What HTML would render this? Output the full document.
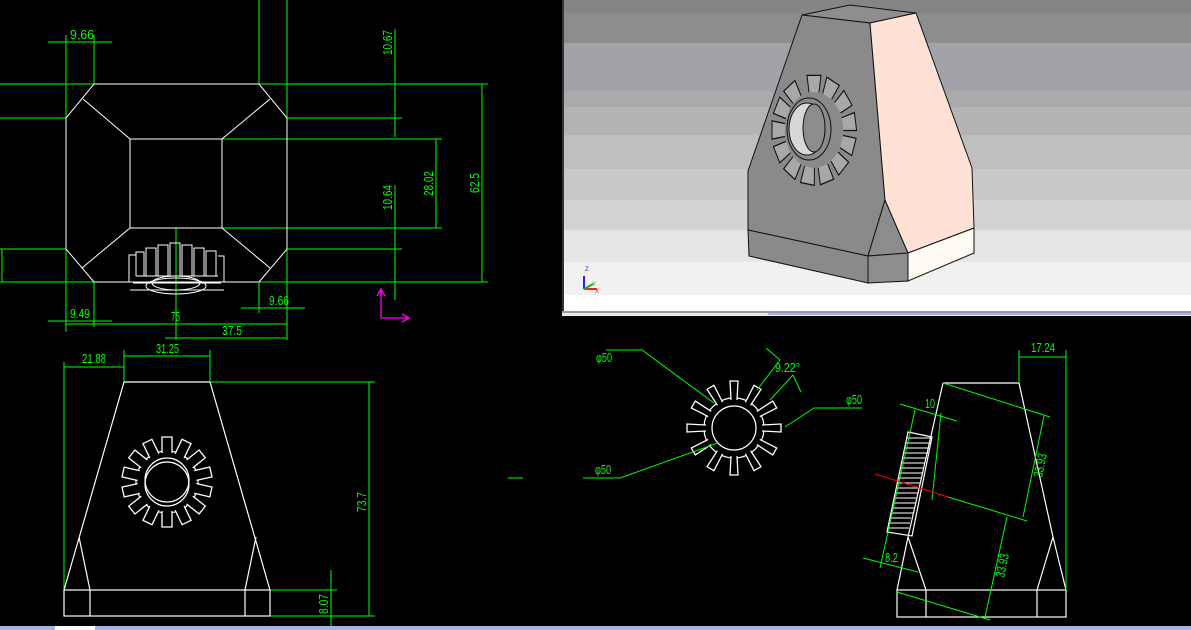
<!DOCTYPE html>
<html><head><meta charset="utf-8"><style>
html,body{margin:0;padding:0;background:#000;width:1191px;height:630px;overflow:hidden}
svg{display:block}
text{font-family:"Liberation Sans",sans-serif;font-size:13px;fill:#00ff00}
</style></head><body>
<svg width="1191" height="630" viewBox="0 0 1191 630" xmlns="http://www.w3.org/2000/svg">
<defs>
<path id="t1" d="M-5,-29 L-5,-45 L5,-45 L5,-29" fill="#000" stroke="#fff" stroke-width="1.3"/>
<path id="t2" d="M-3,-28 L-4,-47 L4,-47 L3,-28" fill="#000" stroke="#fff" stroke-width="1.3"/>
<path id="t3" d="M-5,-29 L-7,-42 L7,-42 L5,-29" fill="#a8a8a8" stroke="#111" stroke-width="1"/>
</defs>

<!-- ===== 3D view panel ===== -->
<g>
<rect x="562" y="0" width="629" height="316" fill="#fff"/>
<rect x="563" y="0" width="628" height="14" fill="#858585"/>
<rect x="563" y="14" width="628" height="29" fill="#8d8d8d"/>
<rect x="563" y="43" width="628" height="48" fill="#a2a2a8"/>
<rect x="563" y="91" width="628" height="16" fill="#aaaaaa"/>
<rect x="563" y="107" width="628" height="28" fill="#b4b4b4"/>
<rect x="563" y="135" width="628" height="34" fill="#bfbfbf"/>
<rect x="563" y="169" width="628" height="31" fill="#c9c9c9"/>
<rect x="563" y="200" width="628" height="30" fill="#d3d3d3"/>
<rect x="563" y="230" width="628" height="32" fill="#e5e5e5"/>
<rect x="563" y="262" width="628" height="33" fill="#f1f1f1"/>
<rect x="562" y="0" width="2" height="316" fill="#333"/>
<rect x="562" y="311" width="629" height="2" fill="#999"/>
<rect x="562" y="313" width="629" height="3" fill="#e8e8ee"/>
<rect x="768" y="313" width="423" height="2" fill="#9fb2f0"/>
<g stroke="#111" stroke-width="1">
<polygon points="802,15 850,5 916,13 870,23" fill="#8e8e8e"/>
<polygon points="748,171 802,15 870,23 885,200 868,256 748,230" fill="#8a8a8a"/>
<polygon points="885,200 868,256 908,253" fill="#8c8c8c"/>
<polygon points="870,23 916,13 972,168 974,228 908,253 885,200" fill="#ffe2d5"/>
<polygon points="748,230 868,256 868,283 749,256" fill="#8a8a8a"/>
<polygon points="868,256 908,253 908,281 868,283" fill="#8e8e8e"/>
<polygon points="908,253 974,228 974,253 908,281" fill="#fffaf2"/>
</g>
<g transform="translate(814,130) scale(1,1.3)">
<use href="#t3"/><use href="#t3" transform="rotate(27)"/><use href="#t3" transform="rotate(54)"/><use href="#t3" transform="rotate(81)"/><use href="#t3" transform="rotate(108)"/><use href="#t3" transform="rotate(135)"/><use href="#t3" transform="rotate(162)"/><use href="#t3" transform="rotate(189)"/><use href="#t3" transform="rotate(216)"/><use href="#t3" transform="rotate(243)"/><use href="#t3" transform="rotate(270)"/><use href="#t3" transform="rotate(297)"/><use href="#t3" transform="rotate(324)"/>
</g>
<ellipse cx="809" cy="129" rx="22" ry="31" fill="#8a8a8a" stroke="#111"/>
<ellipse cx="807" cy="129" rx="18" ry="26" fill="#d8d8d8" stroke="#111"/>
<ellipse cx="814" cy="128" rx="11" ry="24" fill="#8c8c8c" stroke="#111"/>
<line x1="584" y1="276" x2="584" y2="289" stroke="#22f" stroke-width="2"/>
<line x1="584" y1="289" x2="597" y2="289" stroke="#e22" stroke-width="2"/>
<line x1="584" y1="289" x2="593" y2="284" stroke="#2a2" stroke-width="2"/>
<text x="585" y="271" style="font-size:6px;fill:#22f">Z</text>
<text x="592" y="286" style="font-size:6px;fill:#2a2">Y</text>
<text x="595" y="293" style="font-size:6px;fill:#e22">X</text>
</g>

<!-- ===== Top view ===== -->
<g stroke="#00ff00" stroke-width="1" fill="none">
<path d="M0,84H488 M0,282H488 M0,118H66 M287,118H402 M0,249H66 M287,249H402 M222,139H442 M222,228H442"/>
<path d="M259,0V84 M287,0V340 M66,35V332 M94,35V84 M94,282V327 M259,282V313 M395,29V137 M395,185V300 M436,139V228 M482,84V282 M176,228V340 M2,249V282"/>
<path d="M48,42H112 M48,321H112 M241,308H305 M66,324H287 M176,338H287"/>
</g>
<g stroke="#fff" stroke-width="1" fill="none">
<polygon points="94,84 259,84 287,118 287,249 259,282 94,282 66,249 66,118"/>
<rect x="130" y="139" width="92" height="89"/>
<path d="M130,139L83,99 M222,139L270,99 M130,228L82,268 M222,228L270,268"/>
<path d="M130,290h94 M133,283h88 M136,276h82 M136,276V252h8v24 M146,276V248h10v28 M158,276V245h10v31 M170,276V243h10v33 M182,276V245h10v31 M194,276V248h10v28 M206,276V251h10v25 M129,282V255h7 M224,282V256h-6"/>
<ellipse cx="176" cy="283" rx="24" ry="7"/>
<ellipse cx="176" cy="286" rx="30" ry="8"/>
</g>
<path d="M381,318V290 M377,296L381,289L385,296 M381,318H409 M402,314L409,318L402,322" stroke="#f0f" stroke-width="1.3" fill="none"/>
<text x="70" y="39" textLength="24" lengthAdjust="spacingAndGlyphs">9.66</text>
<text x="70" y="318" textLength="20" lengthAdjust="spacingAndGlyphs">9.49</text>
<text x="269" y="305" textLength="20" lengthAdjust="spacingAndGlyphs">9.66</text>
<text x="171" y="321" textLength="9" lengthAdjust="spacingAndGlyphs">75</text>
<text x="222" y="335" textLength="20" lengthAdjust="spacingAndGlyphs">37.5</text>
<text transform="translate(392,55) rotate(-90)" textLength="25" lengthAdjust="spacingAndGlyphs">10.67</text>
<text transform="translate(392,210) rotate(-90)" textLength="25" lengthAdjust="spacingAndGlyphs">10.64</text>
<text transform="translate(433,196) rotate(-90)" textLength="25" lengthAdjust="spacingAndGlyphs">28.02</text>
<text transform="translate(479,193) rotate(-90)" textLength="20" lengthAdjust="spacingAndGlyphs">62.5</text>

<!-- ===== Front view ===== -->
<g stroke="#00ff00" stroke-width="1" fill="none">
<path d="M64,362V616 M124,350V382 M210,350V382 M64,367H124 M124,356H210 M210,382H375 M270,616H375 M369,382V616 M270,590H337 M331,570V630 M165,338H268 M508,478H523"/>
</g>
<g stroke="#fff" stroke-width="1.2" fill="none">
<path d="M124,382H210 M124,382L64,590 M210,382L270,590 M79,537L90,590 M256,537L245,590"/>
<rect x="64" y="590" width="206" height="26"/>
<path d="M90,590V616 M245,590V616"/>
</g>
<g transform="translate(167,482)">
<circle r="31" fill="none" stroke="#fff" stroke-width="1.2"/>
<use href="#t1"/><use href="#t1" transform="rotate(25.7)"/><use href="#t1" transform="rotate(51.4)"/><use href="#t1" transform="rotate(77.1)"/><use href="#t1" transform="rotate(102.8)"/><use href="#t1" transform="rotate(128.5)"/><use href="#t1" transform="rotate(154.2)"/><use href="#t1" transform="rotate(180)"/><use href="#t1" transform="rotate(205.7)"/><use href="#t1" transform="rotate(231.4)"/><use href="#t1" transform="rotate(257.1)"/><use href="#t1" transform="rotate(282.8)"/><use href="#t1" transform="rotate(308.5)"/><use href="#t1" transform="rotate(334.2)"/>
<circle cx="0" cy="-2" r="22" fill="none" stroke="#fff" stroke-width="1.2"/>
<circle cx="0" cy="2" r="22" fill="none" stroke="#fff" stroke-width="1.2"/>
</g>
<text x="82" y="363" textLength="24" lengthAdjust="spacingAndGlyphs">21.88</text>
<text x="156" y="353" textLength="23" lengthAdjust="spacingAndGlyphs">31.25</text>
<text transform="translate(366,512) rotate(-90)" textLength="20" lengthAdjust="spacingAndGlyphs">73.7</text>
<text transform="translate(328,614) rotate(-90)" textLength="20" lengthAdjust="spacingAndGlyphs">8.07</text>

<!-- ===== Gear section ===== -->
<g transform="translate(734,428)">
<circle r="30" fill="none" stroke="#fff" stroke-width="1.2"/>
<use href="#t2"/><use href="#t2" transform="rotate(30)"/><use href="#t2" transform="rotate(60)"/><use href="#t2" transform="rotate(90)"/><use href="#t2" transform="rotate(120)"/><use href="#t2" transform="rotate(150)"/><use href="#t2" transform="rotate(180)"/><use href="#t2" transform="rotate(210)"/><use href="#t2" transform="rotate(240)"/><use href="#t2" transform="rotate(270)"/><use href="#t2" transform="rotate(300)"/><use href="#t2" transform="rotate(330)"/>
<circle r="22" fill="none" stroke="#fff" stroke-width="1.2"/>
</g>
<g stroke="#00ff00" stroke-width="1" fill="none">
<path d="M606,350H642L714,403 M814,408H862 M814,408L785,427 M583,478H620L718,443 M757,390L780,360 M770,400L793,375L801,392 M766,348L780,360"/>
</g>
<text x="596" y="362" textLength="16" lengthAdjust="spacingAndGlyphs">φ50</text>
<text x="846" y="404" textLength="16" lengthAdjust="spacingAndGlyphs">φ50</text>
<text x="595" y="474" textLength="16" lengthAdjust="spacingAndGlyphs">φ50</text>
<text x="775" y="372" textLength="25" lengthAdjust="spacingAndGlyphs">9.22°</text>

<!-- ===== Side view ===== -->
<g stroke="#fff" stroke-width="1.2" fill="none">
<path d="M943,383H1019 L1053,537 L1066,590 M1053,537L1037,590 M943,383L908,537 L897,590 M908,537L926,590"/>
<rect x="897" y="590" width="169" height="27"/>
<path d="M926,590V617 M1037,590V617"/>
<polygon points="908,432 932,437 912,536 887,532"/>
<path d="M907,438h24 M906,443h24 M905,448h24 M904,453h24 M903,458h23 M902,463h23 M901,468h23 M900,473h23 M899,478h22 M898,483h22 M897,488h22 M896,493h22 M895,498h21 M894,503h21 M893,508h21 M892,513h21 M891,518h20 M890,523h20 M889,528h20" stroke-width="1"/>
</g>
<g stroke="#00ff00" stroke-width="1" fill="none">
<path d="M1066,350V590 M1019,350V383 M1019,357H1066 M943,383L1050,417 M948,497L1027,521 M1023,517L1044,416 M897,592L990,620 M985,617L1007,517 M900,404L957,421 M863,558L918,572 M915,410L880,568 M941,413L932,500"/>
</g>
<path d="M875,474L948,497" stroke="#ff0000" stroke-width="1"/>
<text x="1031" y="352" textLength="24" lengthAdjust="spacingAndGlyphs">17.24</text>
<text x="925" y="408" textLength="10" lengthAdjust="spacingAndGlyphs">10</text>
<text x="885" y="562" textLength="13" lengthAdjust="spacingAndGlyphs">8.2</text>
<text transform="translate(1042,478) rotate(-78)" textLength="24" lengthAdjust="spacingAndGlyphs">33.93</text>
<text transform="translate(1004,578) rotate(-78)" textLength="24" lengthAdjust="spacingAndGlyphs">33.93</text>

<rect x="0" y="626" width="1191" height="4" fill="#a4b6e8"/>
<rect x="55" y="626" width="40" height="4" fill="#fff"/>
</svg>
</body></html>
